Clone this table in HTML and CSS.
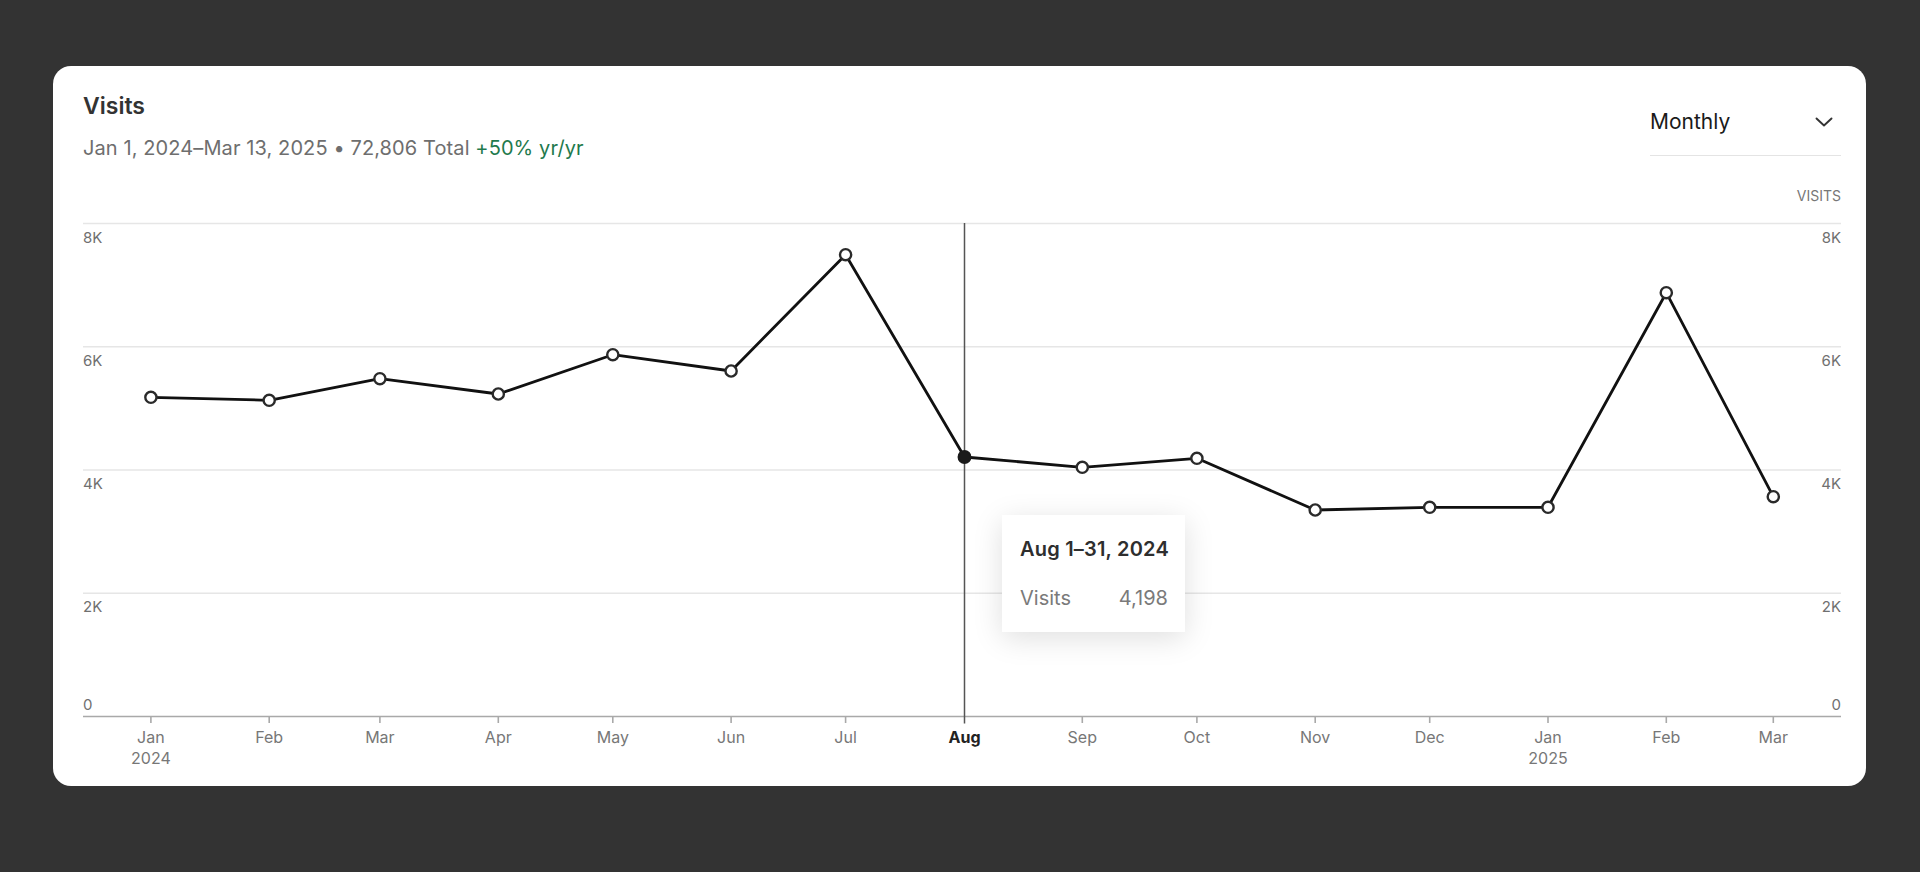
FILE: index.html
```html
<!DOCTYPE html>
<html lang="en">
<head>
<meta charset="utf-8">
<title>Visits</title>
<link rel="stylesheet" href="styles.css">
</head>
<body>
<div class="card">
  <header class="head">
    <div class="titles">
      <h1 class="title">Visits</h1>
      <p class="sub">Jan 1, 2024–Mar 13, 2025 • 72,806 Total <span class="pos">+50% yr/yr</span></p>
    </div>
    <div class="select">
      <span class="select-label">Monthly</span>
      <svg class="chev" width="18" height="10" viewBox="0 0 18 10"><polyline points="1.5,1.5 9,8.5 16.5,1.5" fill="none" stroke="#333" stroke-width="1.9" stroke-linecap="round" stroke-linejoin="round"/></svg>
    </div>
  </header>
  <div class="chart">
    <svg class="plot" width="1758" height="626" viewBox="83 160 1758 626">
      <text class="unit" x="1841" y="200.5" text-anchor="end">VISITS</text>
      <g class="grid">
        <line x1="83" x2="1841" y1="223.5" y2="223.5"/>
        <line x1="83" x2="1841" y1="346.75" y2="346.75"/>
        <line x1="83" x2="1841" y1="470" y2="470"/>
        <line x1="83" x2="1841" y1="593.25" y2="593.25"/>
      </g>
      <g class="ylab">
        <text x="83" y="242.5">8K</text>
        <text x="83" y="366">6K</text>
        <text x="83" y="489.2">4K</text>
        <text x="83" y="612.4">2K</text>
        <text x="83" y="709.5">0</text>
      </g>
      <g class="ylab" text-anchor="end">
        <text x="1841" y="242.5">8K</text>
        <text x="1841" y="366">6K</text>
        <text x="1841" y="489.2">4K</text>
        <text x="1841" y="612.4">2K</text>
        <text x="1841" y="709.5">0</text>
      </g>
      <line class="axis" x1="83" x2="1841" y1="716.5" y2="716.5"/>
      <g class="ticks">
        <line x1="150.9" x2="150.9" y1="716.5" y2="723"/>
        <line x1="269.2" x2="269.2" y1="716.5" y2="723"/>
        <line x1="379.9" x2="379.9" y1="716.5" y2="723"/>
        <line x1="498.3" x2="498.3" y1="716.5" y2="723"/>
        <line x1="612.8" x2="612.8" y1="716.5" y2="723"/>
        <line x1="731.1" x2="731.1" y1="716.5" y2="723"/>
        <line x1="845.6" x2="845.6" y1="716.5" y2="723"/>
        <line x1="1082.3" x2="1082.3" y1="716.5" y2="723"/>
        <line x1="1196.9" x2="1196.9" y1="716.5" y2="723"/>
        <line x1="1315.2" x2="1315.2" y1="716.5" y2="723"/>
        <line x1="1429.7" x2="1429.7" y1="716.5" y2="723"/>
        <line x1="1548" x2="1548" y1="716.5" y2="723"/>
        <line x1="1666.3" x2="1666.3" y1="716.5" y2="723"/>
        <line x1="1773.3" x2="1773.3" y1="716.5" y2="723"/>
      </g>
      <line class="hover" x1="964.5" x2="964.5" y1="223" y2="723.5"/>
      <g class="xlab" text-anchor="middle">
        <text x="150.9" y="743.3">Jan</text>
        <text x="150.9" y="764.3">2024</text>
        <text x="269.2" y="743.3">Feb</text>
        <text x="379.9" y="743.3">Mar</text>
        <text x="498.3" y="743.3">Apr</text>
        <text x="612.8" y="743.3">May</text>
        <text x="731.1" y="743.3">Jun</text>
        <text x="845.6" y="743.3">Jul</text>
        <text class="xlab-on" x="964.5" y="743.3">Aug</text>
        <text x="1082.3" y="743.3">Sep</text>
        <text x="1196.9" y="743.3">Oct</text>
        <text x="1315.2" y="743.3">Nov</text>
        <text x="1429.7" y="743.3">Dec</text>
        <text x="1548" y="743.3">Jan</text>
        <text x="1548" y="764.3">2025</text>
        <text x="1666.3" y="743.3">Feb</text>
        <text x="1773.3" y="743.3">Mar</text>
      </g>
      <polyline class="series" points="150.9,397.3 269.2,400.3 379.9,378.7 498.3,394 612.8,354.7 731.1,371 845.6,254.7 964.5,457 1082.3,467.3 1196.9,458.3 1315.2,510 1429.7,507.3 1548,507.3 1666.3,292.7 1773.3,496.7"/>
      <g class="dots">
        <circle cx="150.9" cy="397.3" r="5.6"/>
        <circle cx="269.2" cy="400.3" r="5.6"/>
        <circle cx="379.9" cy="378.7" r="5.6"/>
        <circle cx="498.3" cy="394" r="5.6"/>
        <circle cx="612.8" cy="354.7" r="5.6"/>
        <circle cx="731.1" cy="371" r="5.6"/>
        <circle cx="845.6" cy="254.7" r="5.6"/>
        <circle cx="1082.3" cy="467.3" r="5.6"/>
        <circle cx="1196.9" cy="458.3" r="5.6"/>
        <circle cx="1315.2" cy="510" r="5.6"/>
        <circle cx="1429.7" cy="507.3" r="5.6"/>
        <circle cx="1548" cy="507.3" r="5.6"/>
        <circle cx="1666.3" cy="292.7" r="5.6"/>
        <circle cx="1773.3" cy="496.7" r="5.6"/>
      </g>
      <circle class="dot-on" cx="964.5" cy="457" r="6.2"/>
    </svg>
    <div class="tip">
      <div class="tip-title">Aug 1–31, 2024</div>
      <div class="tip-row"><span>Visits</span><span>4,198</span></div>
    </div>
  </div>
</div>
</body>
</html>
```
FILE: styles.css
```css
* { box-sizing: border-box; }
html, body { margin: 0; padding: 0; }
body {
  background: #333333;
  font-family: Inter, "Noto Sans", "Liberation Sans", sans-serif;
  width: 1920px;
  height: 872px;
  overflow: hidden;
}
.card {
  margin: 66px 0 0 53px;
  width: 1813px;
  height: 720px;
  background: #ffffff;
  border-radius: 18px;
  padding: 26px 25px 0 30px;
}
.head {
  display: flex;
  justify-content: space-between;
  align-items: flex-start;
  height: 68px;
}
.title {
  margin: 0;
  font-size: 23px;
  line-height: 28px;
  font-weight: 600;
  color: #333333;
}
.sub {
  margin: 16px 0 0;
  font-size: 20px;
  line-height: 25px;
  letter-spacing: 0.1px;
  color: #6e6e6e;
}
.pos { color: #1f7a4d; }
.select {
  margin-top: 17px;
  width: 191px;
  display: flex;
  justify-content: space-between;
  align-items: center;
  padding: 0 8px 20px 0;
  border-bottom: 1.5px solid #e4e4e4;
}
.select-label {
  font-size: 21px;
  line-height: 26px;
  color: #1a1a1a;
}
.chev { display: block; }
.chart {
  position: relative;
}
.plot { display: block; }
.unit {
  font-family: Inter, "Noto Sans", sans-serif;
  font-size: 14px;
  fill: #777777;
}
.grid line { stroke: #e6e6e6; stroke-width: 1.5; }
.ylab text {
  font-family: Inter, "Noto Sans", sans-serif;
  font-size: 15px;
  fill: #707070;
}
.axis { stroke: #a9a9a9; stroke-width: 1.6; }
.ticks line { stroke: #a9a9a9; stroke-width: 1.6; }
.hover { stroke: #555555; stroke-width: 1.5; }
.xlab text {
  font-family: Inter, "Noto Sans", sans-serif;
  font-size: 16px;
  fill: #777777;
}
.xlab .xlab-on { font-weight: 700; fill: #222222; }
.series {
  fill: none;
  stroke: #111111;
  stroke-width: 2.8;
  stroke-linejoin: round;
  stroke-linecap: round;
}
.dots circle { fill: #ffffff; stroke: #2a2a2a; stroke-width: 2.4; }
.dot-on { fill: #1a1a1a; stroke: #1a1a1a; stroke-width: 1.5; }
.tip {
  position: absolute;
  left: 919px;
  top: 355px;
  width: 183px;
  height: 117px;
  background: #ffffff;
  box-shadow: 0 6px 28px rgba(0, 0, 0, 0.13);
  padding: 22px 17px 0 18px;
}
.tip-title {
  font-size: 20px;
  line-height: 24px;
  font-weight: 600;
  letter-spacing: 0.2px;
  white-space: nowrap;
  color: #2e2e2e;
}
.tip-row {
  margin-top: 25px;
  display: flex;
  justify-content: space-between;
  font-size: 20px;
  line-height: 24px;
  color: #7a7a7a;
}
```
